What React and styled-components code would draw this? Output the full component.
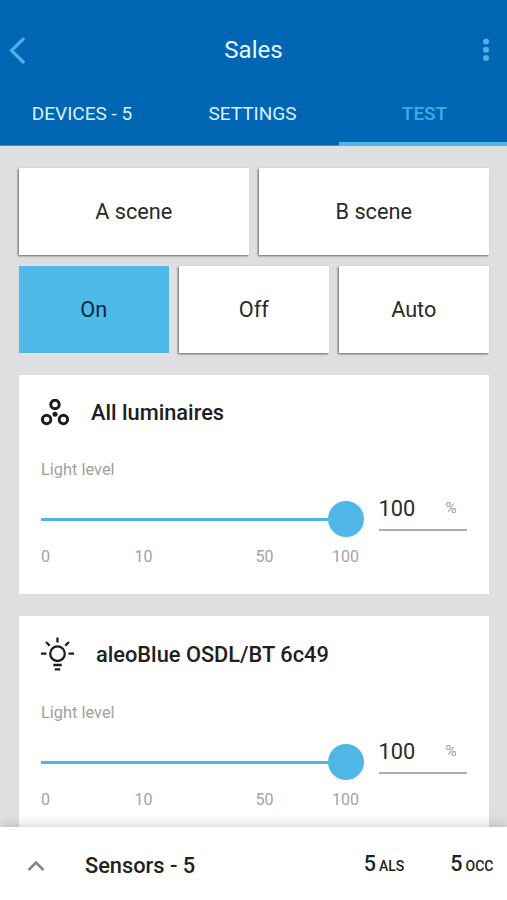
import React from "react";
import styled, { createGlobalStyle } from "styled-components";

const GlobalStyle = createGlobalStyle`
  * { box-sizing: border-box; }
  body {
    margin: 0;
    background: #dfdfe2;
    font-family: Roboto, "Liberation Sans", sans-serif;
    color: #222;
  }
  button { font: inherit; color: inherit; border: 0; padding: 0; background: none; }
`;

const Screen = styled.div`
  width: 507px;
  height: 900px;
  display: flex;
  flex-direction: column;
  overflow: hidden;
  background: #dfdfe2;
`;

const Header = styled.header`
  flex: none;
  height: 146px;
  display: flex;
  flex-direction: column;
  background: #0066b3;
  border-bottom: 1px solid #4a8fc8;
`;

const TitleBar = styled.div`
  height: 82px;
  padding: 18px 8px 0;
  display: grid;
  grid-template-columns: 40px 1fr 40px;
  align-items: center;
  color: #4cb2ea;
`;

const Title = styled.h1`
  margin: 0;
  font-size: 24px;
  line-height: 30px;
  font-weight: 400;
  text-align: center;
  color: #e6f6ff;
`;

const IconButton = styled.button`
  display: flex;
  justify-content: ${(p) => (p.$end ? "flex-end" : "flex-start")};
  padding-right: ${(p) => (p.$end ? "9px" : "0")};
`;

const Tabs = styled.nav`
  height: 64px;
  display: grid;
  grid-template-columns: 164px 175px 168px;
  margin-bottom: -1px;
`;

const Tab = styled.button`
  padding-top: ${(p) => (p.$active ? "4px" : "0")};
  padding-left: ${(p) => (p.$active ? "3px" : "2px")};
  font-size: 19px;
  line-height: 24px;
  letter-spacing: ${(p) => (p.$active ? "0" : "0.02px")};
  font-weight: ${(p) => (p.$active ? 500 : 400)};
  color: ${(p) => (p.$active ? "#41a8e6" : "#d9f0ff")};
  border-bottom: ${(p) => (p.$active ? "4px solid #52b6ea" : "0")};

  &:first-child { padding-left: 0; }
`;

const Content = styled.main`
  flex: 1;
  min-height: 0;
  overflow: hidden;
  padding: 22px 18.5px 0 19px;
`;

const ButtonRow = styled.div`
  display: grid;
  grid-template-columns: repeat(${(p) => p.$columns}, 1fr);
  gap: 10.5px;
  margin-bottom: 11px;
`;

const SceneButton = styled.button`
  height: 87px;
  font-size: 21.7px;
  color: ${(p) => (p.$active ? "#0c2a3d" : "#2a2a2a")};
  background: ${(p) => (p.$active ? "#4fb9e9" : "#fff")};
  box-shadow: ${(p) => (p.$active ? "none" : "-1px 1px 2px rgba(0, 0, 0, 0.55)")};
`;

const Card = styled.section`
  height: 219px;
  margin: 22px 0 21.5px;
  padding: 20px 22px 0;
  background: #fff;
`;

const CardHeader = styled.div`
  height: ${(p) => p.$height}px;
  display: flex;
  align-items: center;
  gap: ${(p) => p.$gap}px;
`;

const CardTitle = styled.h2`
  margin: 0;
  font-size: 21.8px;
  line-height: 30px;
  font-weight: 500;
  color: #202020;
`;

const Label = styled.div`
  margin-top: 29px;
  font-size: 16.4px;
  line-height: 20px;
  color: #a0a0a0;
`;

const LevelRow = styled.div`
  height: 56px;
  margin-top: 7px;
  display: flex;
  align-items: center;
  justify-content: space-between;
`;

const Slider = styled.div`
  width: 323px;
  padding-top: 8px;
  display: flex;
  align-items: center;
`;

const Track = styled.div`
  flex: 1;
  height: 3px;
  background: #4fb5e2;
`;

const Thumb = styled.div`
  width: 36px;
  height: 36px;
  border-radius: 50%;
  background: #4fb7e8;
`;

const ValueField = styled.div`
  width: 88px;
  height: 38px;
  margin-bottom: 6px;
  padding-right: 10px;
  display: flex;
  justify-content: space-between;
  align-items: flex-start;
  border-bottom: 2px solid #adadad;
  font-size: 21.8px;
  line-height: 32px;
  color: #2a2a2a;
`;

const Unit = styled.span`
  font-size: 15.5px;
  line-height: 30px;
  color: #a0a0a0;
`;

const Ticks = styled.div`
  display: grid;
  grid-template-columns: 93.5px 121px 76.5px auto;
  margin-top: 4px;
  font-size: 16px;
  line-height: 20px;
  color: #a3a3a3;
`;

const SensorBar = styled.footer`
  flex: none;
  position: relative;
  height: 73px;
  padding: 5px 13.5px 0 27px;
  display: flex;
  align-items: center;
  background: #fff;
  box-shadow: 0 -1px 12px rgba(0, 0, 0, 0.2);
`;

const SensorTitle = styled.div`
  flex: 1;
  margin-left: 40px;
  font-size: 21.8px;
  line-height: 30px;
  font-weight: 500;
  color: #222;
`;

const SensorCount = styled.div`
  margin-left: 46px;
  margin-bottom: 5px;
  display: flex;
  align-items: baseline;
  gap: 3px;
  font-size: 21.5px;
  font-weight: 500;
`;

const SensorKind = styled.span`
  font-size: 14px;
`;

const BackIcon = () => (
  <svg width="20" height="28" viewBox="0 0 20 28" fill="none" stroke="currentColor" strokeWidth="3.2" strokeLinecap="round">
    <path d="M15.2 3.2L3.5 14.5L15.2 26" />
  </svg>
);

const MoreIcon = () => (
  <svg width="12" height="28" viewBox="0 0 12 28" fill="currentColor">
    <circle cx="8" cy="5.5" r="3" />
    <circle cx="8" cy="13.7" r="3" />
    <circle cx="8" cy="22" r="3" />
  </svg>
);

const GroupIcon = () => (
  <svg width="28" height="28" viewBox="0 0 28 28" fill="none" stroke="#1d1d1d" strokeWidth="3">
    <circle cx="14" cy="5.5" r="4.2" />
    <circle cx="5.6" cy="20.5" r="4.2" />
    <circle cx="22.4" cy="20.5" r="4.2" />
    <circle cx="14" cy="15.2" r="2.5" fill="#1d1d1d" stroke="none" />
  </svg>
);

const BulbIcon = () => (
  <svg width="34" height="36" viewBox="0 0 34 36" fill="none" stroke="#1d1d1d" strokeWidth="2.3">
    <circle cx="16.5" cy="16.7" r="7.3" />
    <path d="M16.5 0.5V5.5M5 5L8.7 8.6M28 5L24.3 8.6M0 16.7H5.5M27.5 16.7H33M12.3 28H20.7M13.8 32.3H19.2" />
  </svg>
);

const ExpandIcon = () => (
  <svg width="18" height="14" viewBox="0 0 18 14" fill="none" stroke="#858585" strokeWidth="2.6">
    <path d="M1.5 11L9 3.5L16.5 11" />
  </svg>
);

function LuminaireCard({ icon, title, gap, headerHeight, level }) {
  return (
    <Card>
      <CardHeader $gap={gap} $height={headerHeight}>
        {icon}
        <CardTitle>{title}</CardTitle>
      </CardHeader>
      <Label>Light level</Label>
      <LevelRow>
        <Slider>
          <Track />
          <Thumb />
        </Slider>
        <ValueField>
          <span>{level}</span>
          <Unit>%</Unit>
        </ValueField>
      </LevelRow>
      <Ticks>
        {[0, 10, 50, 100].map((tick) => (
          <span key={tick}>{tick}</span>
        ))}
      </Ticks>
    </Card>
  );
}

export default function App() {
  return (
    <>
      <GlobalStyle />
      <Screen>
        <Header>
          <TitleBar>
            <IconButton aria-label="Back"><BackIcon /></IconButton>
            <Title>Sales</Title>
            <IconButton $end aria-label="More"><MoreIcon /></IconButton>
          </TitleBar>
          <Tabs>
            <Tab>DEVICES - 5</Tab>
            <Tab>SETTINGS</Tab>
            <Tab $active>TEST</Tab>
          </Tabs>
        </Header>
        <Content>
          <ButtonRow $columns={2}>
            <SceneButton>A scene</SceneButton>
            <SceneButton>B scene</SceneButton>
          </ButtonRow>
          <ButtonRow $columns={3}>
            <SceneButton $active>On</SceneButton>
            <SceneButton>Off</SceneButton>
            <SceneButton>Auto</SceneButton>
          </ButtonRow>
          <LuminaireCard icon={<GroupIcon />} title="All luminaires" gap={22} headerHeight={36} level={100} />
          <LuminaireCard icon={<BulbIcon />} title="aleoBlue OSDL/BT 6c49" gap={21} headerHeight={38} level={100} />
        </Content>
        <SensorBar>
          <ExpandIcon />
          <SensorTitle>Sensors - 5</SensorTitle>
          <SensorCount>5<SensorKind>ALS</SensorKind></SensorCount>
          <SensorCount>5<SensorKind>OCC</SensorKind></SensorCount>
        </SensorBar>
      </Screen>
    </>
  );
}
